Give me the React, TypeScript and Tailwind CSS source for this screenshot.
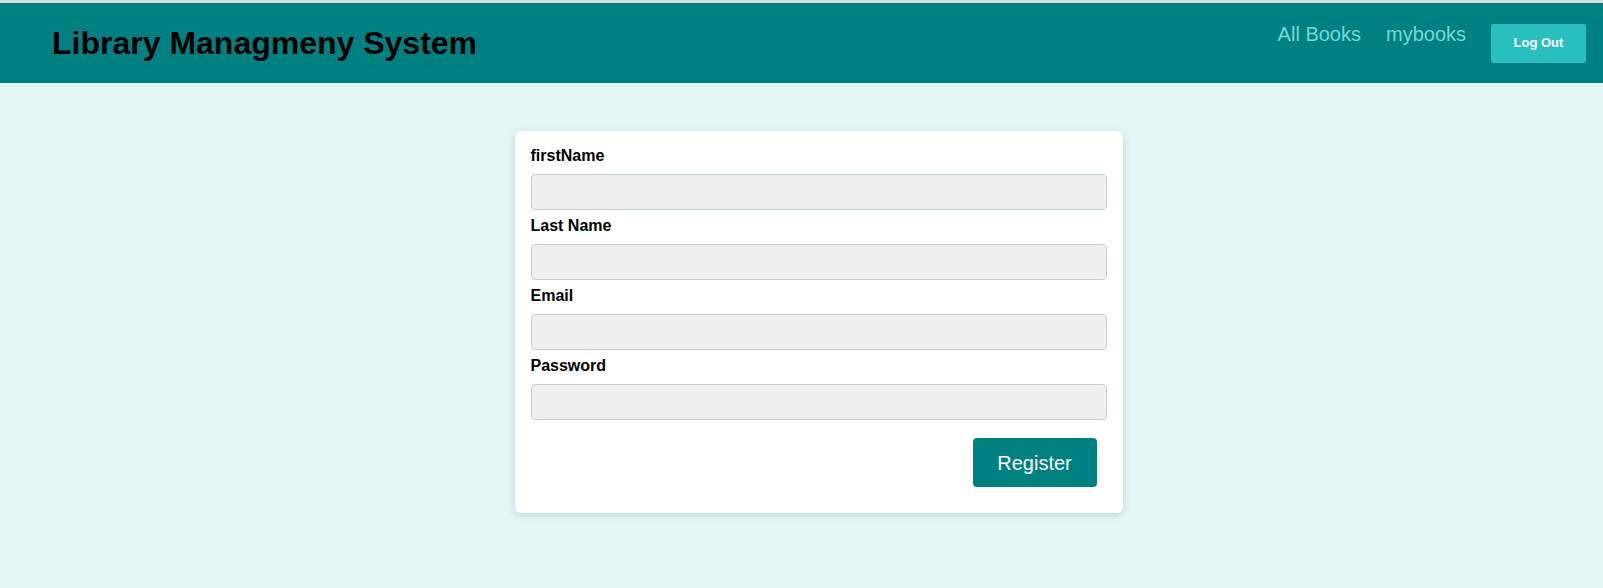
import React from 'react';

const fields = [
  { id: 'firstName', label: 'firstName', type: 'text' },
  { id: 'lastName', label: 'Last Name', type: 'text' },
  { id: 'email', label: 'Email', type: 'email' },
  { id: 'password', label: 'Password', type: 'password' },
];

const App: React.FC = () => {
  return (
    <div className="min-h-[588px] bg-[#e4f7f7] flex flex-col font-['Liberation_Sans',Arial,sans-serif]">
      <div className="h-[3px] bg-[#dadada]" />
      <header className="h-[80px] bg-[#008080] flex items-center justify-between pl-[52px] pr-[17px]">
        <h1 className="text-[32px] leading-[36px] font-bold text-black">Library Managmeny System</h1>
        <div className="flex items-center gap-[25px]">
          <nav className="flex items-center gap-[25px] mb-[18px]">
            <a href="#" className="text-[20px] leading-[23px] text-[#76d7d7]">All Books</a>
            <a href="#" className="text-[20px] leading-[23px] text-[#76d7d7]">mybooks</a>
          </nav>
          <button className="h-[39px] w-[95px] rounded-[3px] bg-[#2abfbf] text-white text-[13px] font-bold">
            Log Out
          </button>
        </div>
      </header>

      <main className="flex justify-center pl-[34px] pt-[48px]">
        <form
          className="w-[608px] bg-white rounded-[6px] shadow-[0_2px_8px_rgba(0,60,60,0.18)] px-4 pt-[13px] pb-4 flex flex-col"
          onSubmit={(e) => e.preventDefault()}
        >
          {fields.map((f) => (
            <div key={f.id} className="flex flex-col mb-[4px]">
              <label htmlFor={f.id} className="text-[16px] leading-[24px] font-bold text-black mb-[6px]">
                {f.label}
              </label>
              <input
                id={f.id}
                type={f.type}
                className="h-[36px] w-full rounded-[4px] border border-[#c4d4d4] bg-[#efefef] px-2 outline-none"
              />
            </div>
          ))}
          <div className="flex justify-end mt-[14px] mr-[10px] mb-[10px]">
            <button
              type="submit"
              className="h-[49px] w-[124px] rounded-[4px] bg-[#008080] text-white text-[20px]"
            >
              Register
            </button>
          </div>
        </form>
      </main>
    </div>
  );
};

export default App;
